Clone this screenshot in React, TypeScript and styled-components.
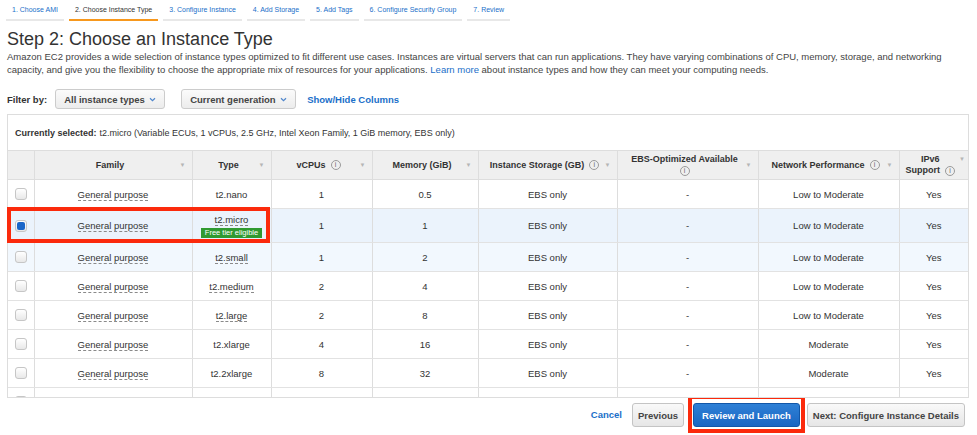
import styled, { createGlobalStyle } from "styled-components"

const GlobalStyle = createGlobalStyle`
  body {
    margin: 0;
    background: #ffffff;
    font-family: "Liberation Sans", Arial, sans-serif;
    color: #333333;
  }
`

const Page = styled.div`
  width: 977px;
  height: 435px;
  overflow: hidden;
  padding: 0 8px 0 7px;
  box-sizing: border-box;
`

const Tabs = styled.div`
  display: flex;
  gap: 5px;
  margin-left: -1px;
`

const Tab = styled.div<{ active?: boolean }>`
  padding: 0 6px;
  height: 19px;
  line-height: 20px;
  font-size: 7px;
  color: ${({ active }) => (active ? "#333333" : "#1a6fc9")};
  border-bottom: 2px solid ${({ active }) => (active ? "#f7981d" : "#e8e8e8")};
  white-space: nowrap;
`

const Title = styled.h1`
  margin: 7px 0 0;
  font-size: 18px;
  line-height: 22px;
  font-weight: normal;
  color: #333333;
`

const Description = styled.p`
  margin: 0;
  font-size: 9.5px;
  line-height: 13px;
  color: #444444;
  a {
    color: #1a6fc9;
    text-decoration: none;
  }
`

const FilterBar = styled.div`
  display: flex;
  align-items: center;
  margin-top: 13px;
  height: 20px;
  font-size: 9.5px;
`

const FilterLabel = styled.b`
  margin-right: 8px;
  color: #333333;
`

const Select = styled.div<{ width: number }>`
  width: ${({ width }) => width}px;
  height: 20px;
  box-sizing: border-box;
  display: flex;
  align-items: center;
  justify-content: space-between;
  padding: 0 8px;
  margin-right: 16px;
  border: 1px solid #cccccc;
  border-radius: 3px;
  background: linear-gradient(#fbfbfb, #ececec);
  font-weight: bold;
  color: #444444;
  svg {
    display: block;
  }
`

const LinkText = styled.a`
  color: #1a6fc9;
  font-weight: bold;
  text-decoration: none;
  margin-left: -5px;
`

const Panel = styled.div`
  position: relative;
  margin-top: 5px;
  border: 1px solid #dddddd;
`

const SelectedInfo = styled.div`
  height: 35px;
  display: flex;
  align-items: center;
  padding: 0 7px;
  font-size: 9px;
  color: #333333;
  b {
    margin-right: 3px;
  }
`

const TableScroll = styled.div`
  height: 246px;
  overflow: hidden;
  border-top: 1px solid #dddddd;
`

const Table = styled.table`
  width: 100%;
  table-layout: fixed;
  border-collapse: collapse;
  font-size: 9.5px;
`

const Th = styled.th`
  height: 28px;
  padding: 0;
  background: #efefef;
  border-left: 1px solid #dddddd;
  border-bottom: 1px solid #dddddd;
  font-weight: bold;
  font-size: 9px;
  color: #333333;
  &:first-child {
    border-left: none;
  }
`

const HeadInner = styled.div<{ top?: boolean; compact?: boolean }>`
  display: flex;
  align-items: ${({ top }) => (top ? "flex-start" : "center")};
  padding: ${({ compact }) => (compact ? "0 3px 0 4px" : "0 6px 0 8px")};
`

const HeadLabel = styled.div`
  flex: 1;
  text-align: center;
  line-height: 11px;
`

const Caret = styled.span`
  color: #b5b5b5;
  font-size: 6px;
  line-height: 11px;
  width: 8px;
  text-align: right;
`

const Info = styled.span<{ first?: boolean }>`
  display: inline-flex;
  align-items: center;
  justify-content: center;
  box-sizing: border-box;
  width: 10px;
  height: 10px;
  margin-left: ${({ first }) => (first ? "0" : "5px")};
  border: 1px solid #9a9a9a;
  border-radius: 50%;
  font-size: 7px;
  line-height: 8px;
  font-weight: normal;
  color: #666666;
  vertical-align: middle;
`

const Row = styled.tr<{ selected?: boolean; hover?: boolean }>`
  background: ${({ selected, hover }) =>
    selected ? "#ebf3fc" : hover ? "#f2f8fe" : "#ffffff"};
  height: ${({ selected }) => (selected ? "34px" : "29px")};
`

const Td = styled.td`
  padding: 0;
  text-align: center;
  vertical-align: middle;
  color: #333333;
  border-left: 1px solid #dddddd;
  border-bottom: 1px solid #e2e2e2;
  &:first-child {
    border-left: none;
  }
`

const Checkbox = styled.span<{ checked?: boolean }>`
  display: inline-flex;
  align-items: center;
  justify-content: center;
  width: 12px;
  height: 12px;
  box-sizing: border-box;
  border: 1px solid #c6c6c6;
  border-radius: 3px;
  background: linear-gradient(#ffffff, #e8e8e8);
  vertical-align: middle;
  &::after {
    content: "";
    display: ${({ checked }) => (checked ? "block" : "none")};
    width: 8px;
    height: 8px;
    border-radius: 2px;
    background: #1a66c9;
  }
`

const Dotted = styled.span`
  border-bottom: 1px dashed #8a8a8a;
`

const TypeCell = styled.div`
  display: flex;
  flex-direction: column;
  align-items: center;
  gap: 2px;
`

const FreeBadge = styled.span`
  background: #2f9a31;
  color: #ffffff;
  font-size: 7.5px;
  line-height: 10px;
  padding: 0 4px;
`

const Highlight = styled.div`
  position: absolute;
  top: 92px;
  left: -1px;
  width: 263px;
  height: 36px;
  box-sizing: border-box;
  border: 4px solid #fb2a0c;
  pointer-events: none;
`

const Footer = styled.div`
  display: flex;
  justify-content: flex-end;
  align-items: flex-start;
  padding-right: 4px;
  margin-top: -3px;
`

const Cancel = styled.a`
  color: #1a6fc9;
  font-weight: bold;
  font-size: 9.5px;
  line-height: 24px;
  margin-top: 8px;
  margin-right: 10px;
`

const Button = styled.button<{ primary?: boolean }>`
  height: 24px;
  margin-top: ${({ primary }) => (primary ? "0" : "8px")};
  padding: ${({ primary }) => (primary ? "0 8px" : "0 5px")};
  border-radius: 3px;
  font-family: "Liberation Sans", Arial, sans-serif;
  font-weight: bold;
  font-size: 9.5px;
  color: ${({ primary }) => (primary ? "#ffffff" : "#444444")};
  border: 1px solid ${({ primary }) => (primary ? "#1257a8" : "#c4c4c4")};
  background: ${({ primary }) =>
    primary ? "linear-gradient(#2e80d6, #1a66c2)" : "linear-gradient(#f9f9f9, #e6e6e6)"};
`

const RedFrame = styled.div`
  border: 4px solid #fb2a0c;
  padding: 4px 1px 2px;
  margin: 0 2px 0 4px;
  display: flex;
`

type InstanceRow = {
  type: string
  vcpu: string
  mem: string
  net: string
  dotted?: boolean
  selected?: boolean
  hover?: boolean
}

const rows: InstanceRow[] = [
  { type: "t2.nano", vcpu: "1", mem: "0.5", net: "Low to Moderate" },
  { type: "t2.micro", vcpu: "1", mem: "1", net: "Low to Moderate", dotted: true, selected: true },
  { type: "t2.small", vcpu: "1", mem: "2", net: "Low to Moderate", dotted: true, hover: true },
  { type: "t2.medium", vcpu: "2", mem: "4", net: "Low to Moderate", dotted: true },
  { type: "t2.large", vcpu: "2", mem: "8", net: "Low to Moderate", dotted: true },
  { type: "t2.xlarge", vcpu: "4", mem: "16", net: "Moderate" },
  { type: "t2.2xlarge", vcpu: "8", mem: "32", net: "Moderate" },
  { type: "t3.nano", vcpu: "2", mem: "0.5", net: "Up to 5 Gigabit" },
]

const tabs = [
  "1. Choose AMI",
  "2. Choose Instance Type",
  "3. Configure Instance",
  "4. Add Storage",
  "5. Add Tags",
  "6. Configure Security Group",
  "7. Review",
]

const Chevron = () => (
  <svg width="7" height="5" viewBox="0 0 7 5">
    <path d="M1 1.2 L3.5 3.6 L6 1.2" fill="none" stroke="#4f86cc" strokeWidth="1.2" />
  </svg>
)

const widths = [26, 158, 79, 101, 106, 139, 141, 141, 69]

export default function App() {
  return (
    <Page>
      <GlobalStyle />
      <Tabs>
        {tabs.map((t, i) => (
          <Tab key={t} active={i === 1}>
            {t}
          </Tab>
        ))}
      </Tabs>
      <Title>Step 2: Choose an Instance Type</Title>
      <Description>
        Amazon EC2 provides a wide selection of instance types optimized to fit different use cases.
        Instances are virtual servers that can run applications. They have varying combinations of
        CPU, memory, storage, and networking capacity, and give you the flexibility to choose the
        appropriate mix of resources for your applications. <a>Learn more</a> about instance types
        and how they can meet your computing needs.
      </Description>
      <FilterBar>
        <FilterLabel>Filter by:</FilterLabel>
        <Select width={110}>
          All instance types <Chevron />
        </Select>
        <Select width={115}>
          Current generation <Chevron />
        </Select>
        <LinkText>Show/Hide Columns</LinkText>
      </FilterBar>
      <Panel>
        <SelectedInfo>
          <b>Currently selected:</b> t2.micro (Variable ECUs, 1 vCPUs, 2.5 GHz, Intel Xeon Family, 1
          GiB memory, EBS only)
        </SelectedInfo>
        <TableScroll>
          <Table>
            <colgroup>
              {widths.map((w, i) => (
                <col key={i} style={{ width: w }} />
              ))}
            </colgroup>
            <thead>
              <tr>
                <Th />
                <Th>
                  <HeadInner>
                    <HeadLabel>Family</HeadLabel>
                    <Caret>▼</Caret>
                  </HeadInner>
                </Th>
                <Th>
                  <HeadInner>
                    <HeadLabel>Type</HeadLabel>
                    <Caret>▼</Caret>
                  </HeadInner>
                </Th>
                <Th>
                  <HeadInner>
                    <HeadLabel>
                      vCPUs<Info>i</Info>
                    </HeadLabel>
                    <Caret>▼</Caret>
                  </HeadInner>
                </Th>
                <Th>
                  <HeadInner>
                    <HeadLabel>Memory (GiB)</HeadLabel>
                    <Caret>▼</Caret>
                  </HeadInner>
                </Th>
                <Th>
                  <HeadInner>
                    <HeadLabel>
                      Instance Storage (GB)<Info>i</Info>
                    </HeadLabel>
                    <Caret>▼</Caret>
                  </HeadInner>
                </Th>
                <Th>
                  <HeadInner>
                    <HeadLabel>
                      EBS-Optimized Available
                      <br />
                      <Info first>i</Info>
                    </HeadLabel>
                    <Caret>▼</Caret>
                  </HeadInner>
                </Th>
                <Th>
                  <HeadInner>
                    <HeadLabel>
                      Network Performance<Info>i</Info>
                    </HeadLabel>
                    <Caret>▼</Caret>
                  </HeadInner>
                </Th>
                <Th>
                  <HeadInner top compact>
                    <HeadLabel>
                      IPv6
                      <br />
                      Support<Info>i</Info>
                    </HeadLabel>
                    <Caret>▼</Caret>
                  </HeadInner>
                </Th>
              </tr>
            </thead>
            <tbody>
              {rows.map((r) => (
                <Row key={r.type} selected={r.selected} hover={r.hover}>
                  <Td>
                    <Checkbox checked={r.selected} />
                  </Td>
                  <Td>
                    <Dotted>General purpose</Dotted>
                  </Td>
                  <Td>
                    {r.selected ? (
                      <TypeCell>
                        <Dotted>{r.type}</Dotted>
                        <FreeBadge>Free tier eligible</FreeBadge>
                      </TypeCell>
                    ) : r.dotted ? (
                      <Dotted>{r.type}</Dotted>
                    ) : (
                      r.type
                    )}
                  </Td>
                  <Td>{r.vcpu}</Td>
                  <Td>{r.mem}</Td>
                  <Td>EBS only</Td>
                  <Td>-</Td>
                  <Td>{r.net}</Td>
                  <Td>Yes</Td>
                </Row>
              ))}
            </tbody>
          </Table>
        </TableScroll>
        <Highlight />
      </Panel>
      <Footer>
        <Cancel>Cancel</Cancel>
        <Button>Previous</Button>
        <RedFrame>
          <Button primary>Review and Launch</Button>
        </RedFrame>
        <Button>Next: Configure Instance Details</Button>
      </Footer>
    </Page>
  )
}
